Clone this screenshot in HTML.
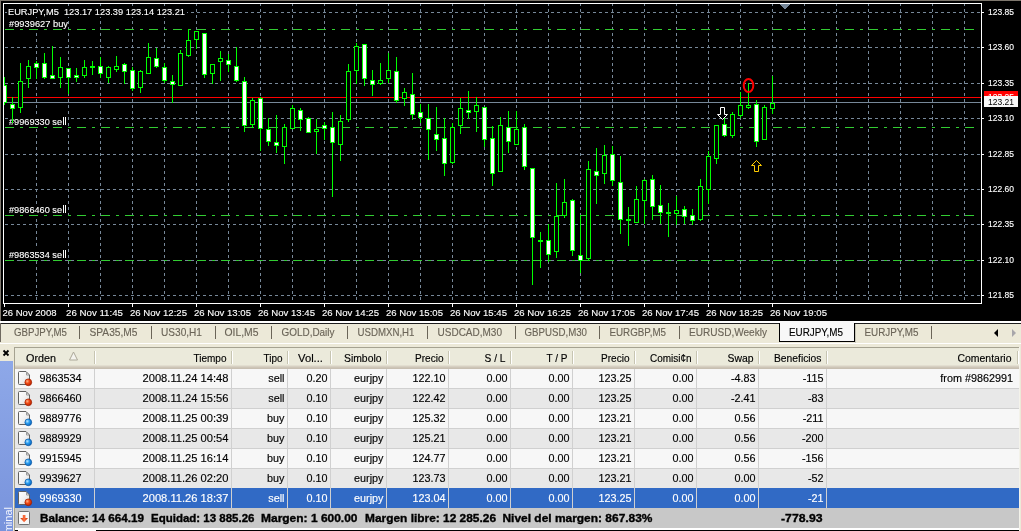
<!DOCTYPE html>
<html><head><meta charset="utf-8"><style>
*{margin:0;padding:0}
html,body{width:1021px;height:531px;overflow:hidden;background:#ece9d8}
svg{position:absolute;left:0;top:0;font-family:"Liberation Sans", sans-serif;will-change:transform}
</style></head><body>
<svg width="1021" height="531" viewBox="0 0 1021 531">
<rect x="0" y="0" width="1021" height="531" fill="#ece9d8"/>
<rect x="0" y="0" width="1021" height="321" fill="#000"/>
<rect x="0" y="0" width="1021" height="1" fill="#7d766c"/>
<rect x="0" y="0" width="1" height="343" fill="#7d766c"/>
<g shape-rendering="crispEdges">
<line x1="36.5" y1="3" x2="36.5" y2="303" stroke="#778899" stroke-dasharray="3 3"/>
<line x1="68.5" y1="3" x2="68.5" y2="303" stroke="#778899" stroke-dasharray="3 3"/>
<line x1="100.5" y1="3" x2="100.5" y2="303" stroke="#778899" stroke-dasharray="3 3"/>
<line x1="132.5" y1="3" x2="132.5" y2="303" stroke="#778899" stroke-dasharray="3 3"/>
<line x1="164.5" y1="3" x2="164.5" y2="303" stroke="#778899" stroke-dasharray="3 3"/>
<line x1="196.5" y1="3" x2="196.5" y2="303" stroke="#778899" stroke-dasharray="3 3"/>
<line x1="228.5" y1="3" x2="228.5" y2="303" stroke="#778899" stroke-dasharray="3 3"/>
<line x1="260.5" y1="3" x2="260.5" y2="303" stroke="#778899" stroke-dasharray="3 3"/>
<line x1="292.5" y1="3" x2="292.5" y2="303" stroke="#778899" stroke-dasharray="3 3"/>
<line x1="324.5" y1="3" x2="324.5" y2="303" stroke="#778899" stroke-dasharray="3 3"/>
<line x1="356.5" y1="3" x2="356.5" y2="303" stroke="#778899" stroke-dasharray="3 3"/>
<line x1="388.5" y1="3" x2="388.5" y2="303" stroke="#778899" stroke-dasharray="3 3"/>
<line x1="420.5" y1="3" x2="420.5" y2="303" stroke="#778899" stroke-dasharray="3 3"/>
<line x1="452.5" y1="3" x2="452.5" y2="303" stroke="#778899" stroke-dasharray="3 3"/>
<line x1="484.5" y1="3" x2="484.5" y2="303" stroke="#778899" stroke-dasharray="3 3"/>
<line x1="516.5" y1="3" x2="516.5" y2="303" stroke="#778899" stroke-dasharray="3 3"/>
<line x1="548.5" y1="3" x2="548.5" y2="303" stroke="#778899" stroke-dasharray="3 3"/>
<line x1="580.5" y1="3" x2="580.5" y2="303" stroke="#778899" stroke-dasharray="3 3"/>
<line x1="612.5" y1="3" x2="612.5" y2="303" stroke="#778899" stroke-dasharray="3 3"/>
<line x1="644.5" y1="3" x2="644.5" y2="303" stroke="#778899" stroke-dasharray="3 3"/>
<line x1="676.5" y1="3" x2="676.5" y2="303" stroke="#778899" stroke-dasharray="3 3"/>
<line x1="708.5" y1="3" x2="708.5" y2="303" stroke="#778899" stroke-dasharray="3 3"/>
<line x1="740.5" y1="3" x2="740.5" y2="303" stroke="#778899" stroke-dasharray="3 3"/>
<line x1="772.5" y1="3" x2="772.5" y2="303" stroke="#778899" stroke-dasharray="3 3"/>
<line x1="804.5" y1="3" x2="804.5" y2="303" stroke="#778899" stroke-dasharray="3 3"/>
<line x1="836.5" y1="3" x2="836.5" y2="303" stroke="#778899" stroke-dasharray="3 3"/>
<line x1="868.5" y1="3" x2="868.5" y2="303" stroke="#778899" stroke-dasharray="3 3"/>
<line x1="900.5" y1="3" x2="900.5" y2="303" stroke="#778899" stroke-dasharray="3 3"/>
<line x1="932.5" y1="3" x2="932.5" y2="303" stroke="#778899" stroke-dasharray="3 3"/>
<line x1="964.5" y1="3" x2="964.5" y2="303" stroke="#778899" stroke-dasharray="3 3"/>
<line x1="5" y1="12.5" x2="981" y2="12.5" stroke="#778899" stroke-dasharray="3 3"/>
<line x1="5" y1="47.5" x2="981" y2="47.5" stroke="#778899" stroke-dasharray="3 3"/>
<line x1="5" y1="83.5" x2="981" y2="83.5" stroke="#778899" stroke-dasharray="3 3"/>
<line x1="5" y1="118.5" x2="981" y2="118.5" stroke="#778899" stroke-dasharray="3 3"/>
<line x1="5" y1="154.5" x2="981" y2="154.5" stroke="#778899" stroke-dasharray="3 3"/>
<line x1="5" y1="189.5" x2="981" y2="189.5" stroke="#778899" stroke-dasharray="3 3"/>
<line x1="5" y1="224.5" x2="981" y2="224.5" stroke="#778899" stroke-dasharray="3 3"/>
<line x1="5" y1="260.5" x2="981" y2="260.5" stroke="#778899" stroke-dasharray="3 3"/>
<line x1="5" y1="295.5" x2="981" y2="295.5" stroke="#778899" stroke-dasharray="3 3"/>
<line x1="5" y1="29.5" x2="974" y2="29.5" stroke="#32cd32" stroke-dasharray="9 6 3 6"/>
<line x1="5" y1="127.5" x2="974" y2="127.5" stroke="#32cd32" stroke-dasharray="9 6 3 6"/>
<line x1="5" y1="215.5" x2="974" y2="215.5" stroke="#32cd32" stroke-dasharray="9 6 3 6"/>
<line x1="5" y1="260.5" x2="974" y2="260.5" stroke="#32cd32" stroke-dasharray="9 6 3 6"/>
</g>
<rect x="7" y="7" width="180" height="10" fill="#000"/>
<rect x="8" y="18" width="60" height="11" fill="#000"/>
<rect x="8" y="116" width="60" height="11" fill="#000"/>
<rect x="8" y="204" width="60" height="11" fill="#000"/>
<rect x="8" y="249" width="60" height="11" fill="#000"/>
<text x="8" y="15" font-size="9.5" fill="#fff" textLength="177" lengthAdjust="spacingAndGlyphs" stroke="#fff" stroke-width="0.12" xml:space="preserve">EURJPY,M5  123.17 123.39 123.14 123.21</text>
<text x="9" y="27" font-size="9.5" fill="#fff" textLength="59" lengthAdjust="spacingAndGlyphs" stroke="#fff" stroke-width="0.12" xml:space="preserve">#9939627 buy</text>
<text x="9" y="125" font-size="9.5" fill="#fff" textLength="53" lengthAdjust="spacingAndGlyphs" stroke="#fff" stroke-width="0.12" xml:space="preserve">#9969330 se</text>
<rect x="63" y="117" width="1" height="8" fill="#fff"/>
<rect x="65" y="117" width="1" height="8" fill="#fff"/>
<text x="9" y="213" font-size="9.5" fill="#fff" textLength="53" lengthAdjust="spacingAndGlyphs" stroke="#fff" stroke-width="0.12" xml:space="preserve">#9866460 se</text>
<rect x="63" y="205" width="1" height="8" fill="#fff"/>
<rect x="65" y="205" width="1" height="8" fill="#fff"/>
<text x="9" y="258" font-size="9.5" fill="#fff" textLength="53" lengthAdjust="spacingAndGlyphs" stroke="#fff" stroke-width="0.12" xml:space="preserve">#9863534 se</text>
<rect x="63" y="250" width="1" height="8" fill="#fff"/>
<rect x="65" y="250" width="1" height="8" fill="#fff"/>
<g shape-rendering="crispEdges">
<line x1="4" y1="97.5" x2="981" y2="97.5" stroke="#ff0000"/>
<line x1="4" y1="102.5" x2="981" y2="102.5" stroke="#778899"/>
<clipPath id="cc"><rect x="4" y="4" width="977" height="299"/></clipPath><g clip-path="url(#cc)">
<line x1="4.5" y1="77" x2="4.5" y2="105" stroke="#00ff00"/>
<rect x="2.5" y="85.5" width="4" height="17" fill="#ffffff" stroke="#00ff00"/>
<line x1="12.5" y1="97" x2="12.5" y2="123" stroke="#00ff00"/>
<rect x="10.5" y="104.5" width="4" height="4" fill="#ffffff" stroke="#00ff00"/>
<line x1="20.5" y1="63" x2="20.5" y2="113" stroke="#00ff00"/>
<rect x="18.5" y="81.5" width="4" height="26" fill="#000000" stroke="#00ff00"/>
<line x1="28.5" y1="60" x2="28.5" y2="88" stroke="#00ff00"/>
<rect x="26.5" y="66.5" width="4" height="12" fill="#000000" stroke="#00ff00"/>
<line x1="36.5" y1="61" x2="36.5" y2="79" stroke="#00ff00"/>
<rect x="34.5" y="63.5" width="4" height="4" fill="#ffffff" stroke="#00ff00"/>
<line x1="44.5" y1="53" x2="44.5" y2="79" stroke="#00ff00"/>
<rect x="42.5" y="63.5" width="4" height="14" fill="#ffffff" stroke="#00ff00"/>
<line x1="52.5" y1="46" x2="52.5" y2="79" stroke="#00ff00"/>
<rect x="50.5" y="75.5" width="4" height="3" fill="#ffffff" stroke="#00ff00"/>
<line x1="60.5" y1="57" x2="60.5" y2="88" stroke="#00ff00"/>
<rect x="58.5" y="67.5" width="4" height="10" fill="#000000" stroke="#00ff00"/>
<line x1="68.5" y1="68" x2="68.5" y2="94" stroke="#00ff00"/>
<rect x="66.5" y="68.5" width="4" height="9" fill="#ffffff" stroke="#00ff00"/>
<line x1="76.5" y1="68" x2="76.5" y2="82" stroke="#00ff00"/>
<rect x="74.5" y="75.5" width="4" height="2" fill="#ffffff" stroke="#00ff00"/>
<line x1="84.5" y1="60" x2="84.5" y2="78" stroke="#00ff00"/>
<rect x="82.5" y="67.5" width="4" height="8" fill="#000000" stroke="#00ff00"/>
<line x1="92.5" y1="61" x2="92.5" y2="75" stroke="#00ff00"/>
<rect x="90" y="66" width="5" height="2" fill="#00ff00"/>
<line x1="100.5" y1="57" x2="100.5" y2="78" stroke="#00ff00"/>
<rect x="98.5" y="66.5" width="4" height="7" fill="#ffffff" stroke="#00ff00"/>
<line x1="108.5" y1="66" x2="108.5" y2="83" stroke="#00ff00"/>
<rect x="106.5" y="67.5" width="4" height="10" fill="#000000" stroke="#00ff00"/>
<line x1="116.5" y1="56" x2="116.5" y2="72" stroke="#00ff00"/>
<rect x="114.5" y="66.5" width="4" height="3" fill="#000000" stroke="#00ff00"/>
<line x1="124.5" y1="63" x2="124.5" y2="84" stroke="#00ff00"/>
<rect x="122.5" y="64.5" width="4" height="7" fill="#ffffff" stroke="#00ff00"/>
<line x1="132.5" y1="67" x2="132.5" y2="91" stroke="#00ff00"/>
<rect x="130.5" y="70.5" width="4" height="18" fill="#ffffff" stroke="#00ff00"/>
<line x1="140.5" y1="70" x2="140.5" y2="93" stroke="#00ff00"/>
<rect x="138.5" y="71.5" width="4" height="16" fill="#000000" stroke="#00ff00"/>
<line x1="148.5" y1="43" x2="148.5" y2="74" stroke="#00ff00"/>
<rect x="146.5" y="57.5" width="4" height="16" fill="#000000" stroke="#00ff00"/>
<line x1="156.5" y1="48" x2="156.5" y2="68" stroke="#00ff00"/>
<rect x="154.5" y="58.5" width="4" height="8" fill="#ffffff" stroke="#00ff00"/>
<line x1="164.5" y1="63" x2="164.5" y2="83" stroke="#00ff00"/>
<rect x="162.5" y="67.5" width="4" height="13" fill="#ffffff" stroke="#00ff00"/>
<line x1="172.5" y1="75" x2="172.5" y2="103" stroke="#00ff00"/>
<rect x="170.5" y="81.5" width="4" height="3" fill="#ffffff" stroke="#00ff00"/>
<line x1="180.5" y1="50" x2="180.5" y2="86" stroke="#00ff00"/>
<rect x="178.5" y="53.5" width="4" height="32" fill="#000000" stroke="#00ff00"/>
<line x1="188.5" y1="29" x2="188.5" y2="57" stroke="#00ff00"/>
<rect x="186.5" y="40.5" width="4" height="15" fill="#000000" stroke="#00ff00"/>
<line x1="196.5" y1="31" x2="196.5" y2="49" stroke="#00ff00"/>
<rect x="194.5" y="31.5" width="4" height="8" fill="#000000" stroke="#00ff00"/>
<line x1="204.5" y1="33" x2="204.5" y2="78" stroke="#00ff00"/>
<rect x="202.5" y="33.5" width="4" height="41" fill="#ffffff" stroke="#00ff00"/>
<line x1="212.5" y1="64" x2="212.5" y2="84" stroke="#00ff00"/>
<rect x="210.5" y="64.5" width="4" height="9" fill="#000000" stroke="#00ff00"/>
<line x1="220.5" y1="51" x2="220.5" y2="81" stroke="#00ff00"/>
<rect x="218.5" y="58.5" width="4" height="3" fill="#000000" stroke="#00ff00"/>
<line x1="228.5" y1="54" x2="228.5" y2="72" stroke="#00ff00"/>
<rect x="226.5" y="60.5" width="4" height="4" fill="#ffffff" stroke="#00ff00"/>
<line x1="236.5" y1="47" x2="236.5" y2="82" stroke="#00ff00"/>
<rect x="234.5" y="66.5" width="4" height="14" fill="#ffffff" stroke="#00ff00"/>
<line x1="244.5" y1="77" x2="244.5" y2="132" stroke="#00ff00"/>
<rect x="242.5" y="81.5" width="4" height="44" fill="#ffffff" stroke="#00ff00"/>
<line x1="252.5" y1="98" x2="252.5" y2="128" stroke="#00ff00"/>
<rect x="250.5" y="100.5" width="4" height="24" fill="#000000" stroke="#00ff00"/>
<line x1="260.5" y1="97" x2="260.5" y2="151" stroke="#00ff00"/>
<rect x="258.5" y="98.5" width="4" height="30" fill="#ffffff" stroke="#00ff00"/>
<line x1="268.5" y1="118" x2="268.5" y2="146" stroke="#00ff00"/>
<rect x="266.5" y="129.5" width="4" height="12" fill="#ffffff" stroke="#00ff00"/>
<line x1="276.5" y1="115" x2="276.5" y2="153" stroke="#00ff00"/>
<rect x="274.5" y="142.5" width="4" height="3" fill="#ffffff" stroke="#00ff00"/>
<line x1="284.5" y1="124" x2="284.5" y2="164" stroke="#00ff00"/>
<rect x="282.5" y="127.5" width="4" height="19" fill="#000000" stroke="#00ff00"/>
<line x1="292.5" y1="105" x2="292.5" y2="129" stroke="#00ff00"/>
<rect x="290.5" y="108.5" width="4" height="20" fill="#000000" stroke="#00ff00"/>
<line x1="300.5" y1="108" x2="300.5" y2="131" stroke="#00ff00"/>
<rect x="298.5" y="110.5" width="4" height="9" fill="#ffffff" stroke="#00ff00"/>
<line x1="308.5" y1="117" x2="308.5" y2="133" stroke="#00ff00"/>
<rect x="306.5" y="118.5" width="4" height="14" fill="#ffffff" stroke="#00ff00"/>
<line x1="316.5" y1="119" x2="316.5" y2="154" stroke="#00ff00"/>
<rect x="314.5" y="129.5" width="4" height="2" fill="#000000" stroke="#00ff00"/>
<line x1="324.5" y1="122" x2="324.5" y2="140" stroke="#00ff00"/>
<rect x="322.5" y="125.5" width="4" height="3" fill="#ffffff" stroke="#00ff00"/>
<line x1="332.5" y1="112" x2="332.5" y2="197" stroke="#00ff00"/>
<rect x="330.5" y="127.5" width="4" height="15" fill="#ffffff" stroke="#00ff00"/>
<line x1="340.5" y1="115" x2="340.5" y2="161" stroke="#00ff00"/>
<rect x="338.5" y="121.5" width="4" height="23" fill="#000000" stroke="#00ff00"/>
<line x1="348.5" y1="64" x2="348.5" y2="122" stroke="#00ff00"/>
<rect x="346.5" y="71.5" width="4" height="48" fill="#000000" stroke="#00ff00"/>
<line x1="356.5" y1="43" x2="356.5" y2="84" stroke="#00ff00"/>
<rect x="354.5" y="46.5" width="4" height="24" fill="#000000" stroke="#00ff00"/>
<line x1="364.5" y1="44" x2="364.5" y2="86" stroke="#00ff00"/>
<rect x="362.5" y="44.5" width="4" height="34" fill="#ffffff" stroke="#00ff00"/>
<line x1="372.5" y1="70" x2="372.5" y2="96" stroke="#00ff00"/>
<rect x="370.5" y="80.5" width="4" height="4" fill="#ffffff" stroke="#00ff00"/>
<line x1="380.5" y1="63" x2="380.5" y2="85" stroke="#00ff00"/>
<rect x="378.5" y="80.5" width="4" height="3" fill="#000000" stroke="#00ff00"/>
<line x1="388.5" y1="53" x2="388.5" y2="83" stroke="#00ff00"/>
<rect x="386.5" y="70.5" width="4" height="8" fill="#000000" stroke="#00ff00"/>
<line x1="396.5" y1="57" x2="396.5" y2="103" stroke="#00ff00"/>
<rect x="394.5" y="71.5" width="4" height="29" fill="#ffffff" stroke="#00ff00"/>
<line x1="404.5" y1="88" x2="404.5" y2="106" stroke="#00ff00"/>
<rect x="402.5" y="92.5" width="4" height="6" fill="#000000" stroke="#00ff00"/>
<line x1="412.5" y1="73" x2="412.5" y2="120" stroke="#00ff00"/>
<rect x="410.5" y="94.5" width="4" height="20" fill="#ffffff" stroke="#00ff00"/>
<line x1="420.5" y1="104" x2="420.5" y2="123" stroke="#00ff00"/>
<rect x="418.5" y="112.5" width="4" height="5" fill="#ffffff" stroke="#00ff00"/>
<line x1="428.5" y1="104" x2="428.5" y2="160" stroke="#00ff00"/>
<rect x="426.5" y="118.5" width="4" height="11" fill="#ffffff" stroke="#00ff00"/>
<line x1="436.5" y1="107" x2="436.5" y2="151" stroke="#00ff00"/>
<rect x="434.5" y="134.5" width="4" height="5" fill="#ffffff" stroke="#00ff00"/>
<line x1="444.5" y1="118" x2="444.5" y2="176" stroke="#00ff00"/>
<rect x="442.5" y="138.5" width="4" height="25" fill="#ffffff" stroke="#00ff00"/>
<line x1="452.5" y1="123" x2="452.5" y2="164" stroke="#00ff00"/>
<rect x="450.5" y="127.5" width="4" height="35" fill="#000000" stroke="#00ff00"/>
<line x1="460.5" y1="98" x2="460.5" y2="134" stroke="#00ff00"/>
<rect x="458.5" y="108.5" width="4" height="17" fill="#000000" stroke="#00ff00"/>
<line x1="468.5" y1="91" x2="468.5" y2="119" stroke="#00ff00"/>
<rect x="466.5" y="110.5" width="4" height="2" fill="#ffffff" stroke="#00ff00"/>
<line x1="476.5" y1="97" x2="476.5" y2="132" stroke="#00ff00"/>
<rect x="474.5" y="105.5" width="4" height="6" fill="#000000" stroke="#00ff00"/>
<line x1="484.5" y1="107" x2="484.5" y2="147" stroke="#00ff00"/>
<rect x="482.5" y="107.5" width="4" height="32" fill="#ffffff" stroke="#00ff00"/>
<line x1="492.5" y1="126" x2="492.5" y2="186" stroke="#00ff00"/>
<rect x="490.5" y="138.5" width="4" height="35" fill="#ffffff" stroke="#00ff00"/>
<line x1="500.5" y1="117" x2="500.5" y2="172" stroke="#00ff00"/>
<rect x="498.5" y="125.5" width="4" height="46" fill="#000000" stroke="#00ff00"/>
<line x1="508.5" y1="111" x2="508.5" y2="153" stroke="#00ff00"/>
<rect x="506.5" y="127.5" width="4" height="14" fill="#ffffff" stroke="#00ff00"/>
<line x1="516.5" y1="111" x2="516.5" y2="145" stroke="#00ff00"/>
<rect x="514.5" y="129.5" width="4" height="15" fill="#000000" stroke="#00ff00"/>
<line x1="524.5" y1="124" x2="524.5" y2="170" stroke="#00ff00"/>
<rect x="522.5" y="127.5" width="4" height="39" fill="#ffffff" stroke="#00ff00"/>
<line x1="532.5" y1="168" x2="532.5" y2="285" stroke="#00ff00"/>
<rect x="530.5" y="168.5" width="4" height="69" fill="#ffffff" stroke="#00ff00"/>
<line x1="540.5" y1="232" x2="540.5" y2="268" stroke="#00ff00"/>
<rect x="538" y="240" width="5" height="2" fill="#00ff00"/>
<line x1="548.5" y1="224" x2="548.5" y2="262" stroke="#00ff00"/>
<rect x="546.5" y="240.5" width="4" height="14" fill="#ffffff" stroke="#00ff00"/>
<line x1="556.5" y1="183" x2="556.5" y2="258" stroke="#00ff00"/>
<rect x="554.5" y="216.5" width="4" height="35" fill="#000000" stroke="#00ff00"/>
<line x1="564.5" y1="179" x2="564.5" y2="218" stroke="#00ff00"/>
<rect x="562.5" y="202.5" width="4" height="13" fill="#000000" stroke="#00ff00"/>
<line x1="572.5" y1="199" x2="572.5" y2="256" stroke="#00ff00"/>
<rect x="570.5" y="200.5" width="4" height="50" fill="#ffffff" stroke="#00ff00"/>
<line x1="580.5" y1="215" x2="580.5" y2="273" stroke="#00ff00"/>
<rect x="578.5" y="255.5" width="4" height="5" fill="#ffffff" stroke="#00ff00"/>
<line x1="588.5" y1="161" x2="588.5" y2="261" stroke="#00ff00"/>
<rect x="586.5" y="169.5" width="4" height="89" fill="#000000" stroke="#00ff00"/>
<line x1="596.5" y1="148" x2="596.5" y2="204" stroke="#00ff00"/>
<rect x="594.5" y="171.5" width="4" height="4" fill="#ffffff" stroke="#00ff00"/>
<line x1="604.5" y1="145" x2="604.5" y2="184" stroke="#00ff00"/>
<rect x="602.5" y="155.5" width="4" height="18" fill="#000000" stroke="#00ff00"/>
<line x1="612.5" y1="146" x2="612.5" y2="186" stroke="#00ff00"/>
<rect x="610.5" y="154.5" width="4" height="26" fill="#ffffff" stroke="#00ff00"/>
<line x1="620.5" y1="156" x2="620.5" y2="234" stroke="#00ff00"/>
<rect x="618.5" y="182.5" width="4" height="37" fill="#ffffff" stroke="#00ff00"/>
<line x1="628.5" y1="207" x2="628.5" y2="246" stroke="#00ff00"/>
<rect x="626" y="219" width="5" height="2" fill="#00ff00"/>
<line x1="636.5" y1="186" x2="636.5" y2="223" stroke="#00ff00"/>
<rect x="634.5" y="199.5" width="4" height="23" fill="#000000" stroke="#00ff00"/>
<line x1="644.5" y1="179" x2="644.5" y2="224" stroke="#00ff00"/>
<rect x="642.5" y="180.5" width="4" height="20" fill="#000000" stroke="#00ff00"/>
<line x1="652.5" y1="175" x2="652.5" y2="220" stroke="#00ff00"/>
<rect x="650.5" y="179.5" width="4" height="27" fill="#ffffff" stroke="#00ff00"/>
<line x1="660.5" y1="185" x2="660.5" y2="224" stroke="#00ff00"/>
<rect x="658.5" y="205.5" width="4" height="7" fill="#ffffff" stroke="#00ff00"/>
<line x1="668.5" y1="203" x2="668.5" y2="237" stroke="#00ff00"/>
<rect x="666" y="212" width="5" height="2" fill="#00ff00"/>
<line x1="676.5" y1="196" x2="676.5" y2="225" stroke="#00ff00"/>
<rect x="674.5" y="210.5" width="4" height="3" fill="#000000" stroke="#00ff00"/>
<line x1="684.5" y1="206" x2="684.5" y2="224" stroke="#00ff00"/>
<rect x="682.5" y="209.5" width="4" height="7" fill="#ffffff" stroke="#00ff00"/>
<line x1="692.5" y1="209" x2="692.5" y2="225" stroke="#00ff00"/>
<rect x="690.5" y="215.5" width="4" height="5" fill="#ffffff" stroke="#00ff00"/>
<line x1="700.5" y1="179" x2="700.5" y2="221" stroke="#00ff00"/>
<rect x="698.5" y="186.5" width="4" height="33" fill="#000000" stroke="#00ff00"/>
<line x1="708.5" y1="151" x2="708.5" y2="204" stroke="#00ff00"/>
<rect x="706.5" y="156.5" width="4" height="33" fill="#000000" stroke="#00ff00"/>
<line x1="716.5" y1="125" x2="716.5" y2="164" stroke="#00ff00"/>
<rect x="714.5" y="125.5" width="4" height="33" fill="#000000" stroke="#00ff00"/>
<line x1="724.5" y1="118" x2="724.5" y2="137" stroke="#00ff00"/>
<rect x="722.5" y="124.5" width="4" height="11" fill="#ffffff" stroke="#00ff00"/>
<line x1="732.5" y1="112" x2="732.5" y2="138" stroke="#00ff00"/>
<rect x="730.5" y="114.5" width="4" height="21" fill="#000000" stroke="#00ff00"/>
<line x1="740.5" y1="92" x2="740.5" y2="118" stroke="#00ff00"/>
<rect x="738.5" y="105.5" width="4" height="10" fill="#000000" stroke="#00ff00"/>
<line x1="748.5" y1="83" x2="748.5" y2="109" stroke="#00ff00"/>
<rect x="746.5" y="105.5" width="4" height="2" fill="#000000" stroke="#00ff00"/>
<line x1="756.5" y1="100" x2="756.5" y2="147" stroke="#00ff00"/>
<rect x="754.5" y="104.5" width="4" height="37" fill="#ffffff" stroke="#00ff00"/>
<line x1="764.5" y1="105" x2="764.5" y2="140" stroke="#00ff00"/>
<rect x="762.5" y="107.5" width="4" height="32" fill="#000000" stroke="#00ff00"/>
<line x1="772.5" y1="76" x2="772.5" y2="114" stroke="#00ff00"/>
<rect x="770.5" y="103.5" width="4" height="5" fill="#000000" stroke="#00ff00"/>
</g>
<rect x="3.5" y="3.5" width="978" height="300" fill="none" stroke="#fff"/>
<polygon points="780,4 790,4 785,9.5" fill="#778899"/>
<rect x="982" y="12" width="2" height="1" fill="#fff"/>
<rect x="982" y="47" width="2" height="1" fill="#fff"/>
<rect x="982" y="83" width="2" height="1" fill="#fff"/>
<rect x="982" y="118" width="2" height="1" fill="#fff"/>
<rect x="982" y="154" width="2" height="1" fill="#fff"/>
<rect x="982" y="189" width="2" height="1" fill="#fff"/>
<rect x="982" y="224" width="2" height="1" fill="#fff"/>
<rect x="982" y="260" width="2" height="1" fill="#fff"/>
<rect x="982" y="295" width="2" height="1" fill="#fff"/>
</g>
<text x="988" y="15" font-size="9" fill="#fff" textLength="26" lengthAdjust="spacingAndGlyphs" stroke="#fff" stroke-width="0.12" xml:space="preserve">123.85</text>
<text x="988" y="50" font-size="9" fill="#fff" textLength="26" lengthAdjust="spacingAndGlyphs" stroke="#fff" stroke-width="0.12" xml:space="preserve">123.60</text>
<text x="988" y="86" font-size="9" fill="#fff" textLength="26" lengthAdjust="spacingAndGlyphs" stroke="#fff" stroke-width="0.12" xml:space="preserve">123.35</text>
<text x="988" y="121" font-size="9" fill="#fff" textLength="26" lengthAdjust="spacingAndGlyphs" stroke="#fff" stroke-width="0.12" xml:space="preserve">123.10</text>
<text x="988" y="157" font-size="9" fill="#fff" textLength="26" lengthAdjust="spacingAndGlyphs" stroke="#fff" stroke-width="0.12" xml:space="preserve">122.85</text>
<text x="988" y="192" font-size="9" fill="#fff" textLength="26" lengthAdjust="spacingAndGlyphs" stroke="#fff" stroke-width="0.12" xml:space="preserve">122.60</text>
<text x="988" y="227" font-size="9" fill="#fff" textLength="26" lengthAdjust="spacingAndGlyphs" stroke="#fff" stroke-width="0.12" xml:space="preserve">122.35</text>
<text x="988" y="263" font-size="9" fill="#fff" textLength="26" lengthAdjust="spacingAndGlyphs" stroke="#fff" stroke-width="0.12" xml:space="preserve">122.10</text>
<text x="988" y="298" font-size="9" fill="#fff" textLength="26" lengthAdjust="spacingAndGlyphs" stroke="#fff" stroke-width="0.12" xml:space="preserve">121.85</text>
<rect x="984" y="91" width="34" height="11" fill="#ff0000"/>
<text x="988" y="100" font-size="9" fill="#fff" textLength="26" lengthAdjust="spacingAndGlyphs" stroke="#fff" stroke-width="0.12" xml:space="preserve">123.25</text>
<rect x="984" y="96" width="34" height="11" fill="#f8f8f8"/>
<text x="988" y="105" font-size="9" fill="#000" textLength="26" lengthAdjust="spacingAndGlyphs" xml:space="preserve">123.21</text>
<rect x="4" y="304" width="1" height="3" fill="#fff"/>
<text x="2.5" y="316" font-size="9.5" fill="#fff" textLength="54" lengthAdjust="spacingAndGlyphs" stroke="#fff" stroke-width="0.12" xml:space="preserve">26 Nov 2008</text>
<rect x="68" y="304" width="1" height="3" fill="#fff"/>
<text x="66" y="316" font-size="9.5" fill="#fff" textLength="57" lengthAdjust="spacingAndGlyphs" stroke="#fff" stroke-width="0.12" xml:space="preserve">26 Nov 11:45</text>
<rect x="132" y="304" width="1" height="3" fill="#fff"/>
<text x="130" y="316" font-size="9.5" fill="#fff" textLength="57" lengthAdjust="spacingAndGlyphs" stroke="#fff" stroke-width="0.12" xml:space="preserve">26 Nov 12:25</text>
<rect x="196" y="304" width="1" height="3" fill="#fff"/>
<text x="194" y="316" font-size="9.5" fill="#fff" textLength="57" lengthAdjust="spacingAndGlyphs" stroke="#fff" stroke-width="0.12" xml:space="preserve">26 Nov 13:05</text>
<rect x="260" y="304" width="1" height="3" fill="#fff"/>
<text x="258" y="316" font-size="9.5" fill="#fff" textLength="57" lengthAdjust="spacingAndGlyphs" stroke="#fff" stroke-width="0.12" xml:space="preserve">26 Nov 13:45</text>
<rect x="324" y="304" width="1" height="3" fill="#fff"/>
<text x="322" y="316" font-size="9.5" fill="#fff" textLength="57" lengthAdjust="spacingAndGlyphs" stroke="#fff" stroke-width="0.12" xml:space="preserve">26 Nov 14:25</text>
<rect x="388" y="304" width="1" height="3" fill="#fff"/>
<text x="386" y="316" font-size="9.5" fill="#fff" textLength="57" lengthAdjust="spacingAndGlyphs" stroke="#fff" stroke-width="0.12" xml:space="preserve">26 Nov 15:05</text>
<rect x="452" y="304" width="1" height="3" fill="#fff"/>
<text x="450" y="316" font-size="9.5" fill="#fff" textLength="57" lengthAdjust="spacingAndGlyphs" stroke="#fff" stroke-width="0.12" xml:space="preserve">26 Nov 15:45</text>
<rect x="516" y="304" width="1" height="3" fill="#fff"/>
<text x="514" y="316" font-size="9.5" fill="#fff" textLength="57" lengthAdjust="spacingAndGlyphs" stroke="#fff" stroke-width="0.12" xml:space="preserve">26 Nov 16:25</text>
<rect x="580" y="304" width="1" height="3" fill="#fff"/>
<text x="578" y="316" font-size="9.5" fill="#fff" textLength="57" lengthAdjust="spacingAndGlyphs" stroke="#fff" stroke-width="0.12" xml:space="preserve">26 Nov 17:05</text>
<rect x="644" y="304" width="1" height="3" fill="#fff"/>
<text x="642" y="316" font-size="9.5" fill="#fff" textLength="57" lengthAdjust="spacingAndGlyphs" stroke="#fff" stroke-width="0.12" xml:space="preserve">26 Nov 17:45</text>
<rect x="708" y="304" width="1" height="3" fill="#fff"/>
<text x="706" y="316" font-size="9.5" fill="#fff" textLength="57" lengthAdjust="spacingAndGlyphs" stroke="#fff" stroke-width="0.12" xml:space="preserve">26 Nov 18:25</text>
<rect x="772" y="304" width="1" height="3" fill="#fff"/>
<text x="770" y="316" font-size="9.5" fill="#fff" textLength="57" lengthAdjust="spacingAndGlyphs" stroke="#fff" stroke-width="0.12" xml:space="preserve">26 Nov 19:05</text>
<ellipse cx="748.5" cy="85.5" rx="4.8" ry="6.6" fill="none" stroke="#ff0000" stroke-width="2"/>
<path d="M720.5,107.5 h4 v7 h3 l-5,5 l-5,-5 h3 z" fill="none" stroke="#fff" stroke-width="1"/>
<path d="M756.5,160.5 L761.5,165.5 H758.5 V171.5 H754.5 V165.5 H751.5 Z" fill="none" stroke="#ffcc00" stroke-width="1"/>
<rect x="0" y="321" width="1021" height="23" fill="#ece9d8"/>
<rect x="0" y="321" width="1021" height="1" fill="#ffffff"/>
<rect x="0" y="322" width="1021" height="1" fill="#ffffff"/>
<rect x="0" y="323" width="779" height="1" fill="#1e1e1e"/>
<rect x="854" y="323" width="167" height="1" fill="#1e1e1e"/>
<rect x="0" y="343" width="1021" height="1" fill="#ffffff"/>
<rect x="0" y="323" width="1" height="19" fill="#6f6a60"/>
<text x="14" y="336" font-size="11" fill="#6b6558" textLength="53" lengthAdjust="spacingAndGlyphs" stroke="#6b6558" stroke-width="0.15" xml:space="preserve">GBPJPY,M5</text>
<text x="89.5" y="336" font-size="11" fill="#6b6558" textLength="48.0" lengthAdjust="spacingAndGlyphs" stroke="#6b6558" stroke-width="0.15" xml:space="preserve">SPA35,M5</text>
<text x="161" y="336" font-size="11" fill="#6b6558" textLength="41" lengthAdjust="spacingAndGlyphs" stroke="#6b6558" stroke-width="0.15" xml:space="preserve">US30,H1</text>
<text x="224.5" y="336" font-size="11" fill="#6b6558" textLength="34.0" lengthAdjust="spacingAndGlyphs" stroke="#6b6558" stroke-width="0.15" xml:space="preserve">OIL,M5</text>
<text x="281.5" y="336" font-size="11" fill="#6b6558" textLength="53.0" lengthAdjust="spacingAndGlyphs" stroke="#6b6558" stroke-width="0.15" xml:space="preserve">GOLD,Daily</text>
<text x="357.5" y="336" font-size="11" fill="#6b6558" textLength="57.0" lengthAdjust="spacingAndGlyphs" stroke="#6b6558" stroke-width="0.15" xml:space="preserve">USDMXN,H1</text>
<text x="437.5" y="336" font-size="11" fill="#6b6558" textLength="64.5" lengthAdjust="spacingAndGlyphs" stroke="#6b6558" stroke-width="0.15" xml:space="preserve">USDCAD,M30</text>
<text x="524.5" y="336" font-size="11" fill="#6b6558" textLength="62.5" lengthAdjust="spacingAndGlyphs" stroke="#6b6558" stroke-width="0.15" xml:space="preserve">GBPUSD,M30</text>
<text x="609.5" y="336" font-size="11" fill="#6b6558" textLength="56.5" lengthAdjust="spacingAndGlyphs" stroke="#6b6558" stroke-width="0.15" xml:space="preserve">EURGBP,M5</text>
<text x="689" y="336" font-size="11" fill="#6b6558" textLength="78" lengthAdjust="spacingAndGlyphs" stroke="#6b6558" stroke-width="0.15" xml:space="preserve">EURUSD,Weekly</text>
<rect x="79" y="326" width="1" height="13" fill="#6b6558"/>
<rect x="151" y="326" width="1" height="13" fill="#6b6558"/>
<rect x="215" y="326" width="1" height="13" fill="#6b6558"/>
<rect x="271" y="326" width="1" height="13" fill="#6b6558"/>
<rect x="347" y="326" width="1" height="13" fill="#6b6558"/>
<rect x="427" y="326" width="1" height="13" fill="#6b6558"/>
<rect x="515" y="326" width="1" height="13" fill="#6b6558"/>
<rect x="599" y="326" width="1" height="13" fill="#6b6558"/>
<rect x="679" y="326" width="1" height="13" fill="#6b6558"/>
<rect x="931" y="326" width="1" height="13" fill="#6b6558"/>
<rect x="780" y="321" width="74" height="20" fill="#f8f8f8"/>
<rect x="779" y="323" width="1" height="19" fill="#000"/>
<rect x="779" y="341" width="76" height="1" fill="#000"/>
<rect x="854" y="323" width="1" height="19" fill="#000"/>
<rect x="855" y="324" width="1" height="19" fill="#c8c6b8"/>
<text x="789" y="336" font-size="11" fill="#000" textLength="54" lengthAdjust="spacingAndGlyphs" stroke="#000" stroke-width="0.15" xml:space="preserve">EURJPY,M5</text>
<text x="864.5" y="336" font-size="11" fill="#6b6558" textLength="54" lengthAdjust="spacingAndGlyphs" stroke="#6b6558" stroke-width="0.15" xml:space="preserve">EURJPY,M5</text>
<polygon points="998,329 998,337 994,333" fill="#000"/>
<polygon points="1012,329 1012,337 1016,333" fill="#a7a6aa"/>
<rect x="0" y="344" width="1021" height="187" fill="#ece9d8"/>
<rect x="0" y="343" width="1021" height="1" fill="#ffffff"/>
<defs><linearGradient id="lb" x1="0" y1="0" x2="0" y2="1"><stop offset="0" stop-color="#8ea8e8"/><stop offset="1" stop-color="#7893dc"/></linearGradient><radialGradient id="rb" cx="0.35" cy="0.35" r="0.7"><stop offset="0" stop-color="#ffb08a"/><stop offset="0.45" stop-color="#f04a12"/><stop offset="1" stop-color="#b42000"/></radialGradient><radialGradient id="bb" cx="0.35" cy="0.35" r="0.7"><stop offset="0" stop-color="#b8e4ff"/><stop offset="0.45" stop-color="#2a9ef0"/><stop offset="1" stop-color="#0860b8"/></radialGradient><linearGradient id="pg" x1="0" y1="0" x2="1" y2="1"><stop offset="0" stop-color="#ffffff"/><stop offset="0.5" stop-color="#f2f2f2"/><stop offset="1" stop-color="#d8d8d8"/></linearGradient></defs>
<rect x="0" y="361" width="13" height="170" fill="url(#lb)"/>
<text x="0" y="0" font-size="11" fill="#f4f6ff" text-anchor="end" transform="translate(11.5,507) rotate(-90)">minal</text>
<path d="M3.5,350.5 l5,5 M8.5,350.5 l-5,5" stroke="#000" stroke-width="1.8"/>
<rect x="14" y="347" width="1" height="185" fill="#a5a291"/>
<rect x="14" y="347" width="1006" height="1" fill="#a5a291"/>
<rect x="1019" y="347" width="1" height="184" fill="#f3f2ea"/>
<rect x="1020" y="344" width="1" height="187" fill="#ece9d8"/>
<rect x="15" y="348" width="1004" height="17" fill="#ebeadb"/>
<rect x="94" y="351" width="1" height="13" fill="#c7c5b2"/>
<rect x="95" y="351" width="1" height="13" fill="#ffffff"/>
<rect x="231" y="351" width="1" height="13" fill="#c7c5b2"/>
<rect x="232" y="351" width="1" height="13" fill="#ffffff"/>
<rect x="287" y="351" width="1" height="13" fill="#c7c5b2"/>
<rect x="288" y="351" width="1" height="13" fill="#ffffff"/>
<rect x="330" y="351" width="1" height="13" fill="#c7c5b2"/>
<rect x="331" y="351" width="1" height="13" fill="#ffffff"/>
<rect x="386" y="351" width="1" height="13" fill="#c7c5b2"/>
<rect x="387" y="351" width="1" height="13" fill="#ffffff"/>
<rect x="448" y="351" width="1" height="13" fill="#c7c5b2"/>
<rect x="449" y="351" width="1" height="13" fill="#ffffff"/>
<rect x="510" y="351" width="1" height="13" fill="#c7c5b2"/>
<rect x="511" y="351" width="1" height="13" fill="#ffffff"/>
<rect x="572" y="351" width="1" height="13" fill="#c7c5b2"/>
<rect x="573" y="351" width="1" height="13" fill="#ffffff"/>
<rect x="634" y="351" width="1" height="13" fill="#c7c5b2"/>
<rect x="635" y="351" width="1" height="13" fill="#ffffff"/>
<rect x="696" y="351" width="1" height="13" fill="#c7c5b2"/>
<rect x="697" y="351" width="1" height="13" fill="#ffffff"/>
<rect x="758" y="351" width="1" height="13" fill="#c7c5b2"/>
<rect x="759" y="351" width="1" height="13" fill="#ffffff"/>
<rect x="826" y="351" width="1" height="13" fill="#c7c5b2"/>
<rect x="827" y="351" width="1" height="13" fill="#ffffff"/>
<rect x="1017" y="351" width="1" height="13" fill="#c7c5b2"/>
<rect x="1018" y="351" width="1" height="13" fill="#ffffff"/>
<text x="26" y="362" font-size="11" fill="#000" textLength="30" lengthAdjust="spacingAndGlyphs" stroke="#000" stroke-width="0.15" xml:space="preserve">Orden</text>
<path d="M73.5,352 l4,8 h-8 z" fill="#f4f3ee" stroke="#aca899"/>
<text x="193.5" y="362" font-size="11" fill="#000" textLength="33" lengthAdjust="spacingAndGlyphs" stroke="#000" stroke-width="0.15" xml:space="preserve">Tiempo</text>
<text x="263.5" y="362" font-size="11" fill="#000" textLength="19" lengthAdjust="spacingAndGlyphs" stroke="#000" stroke-width="0.15" xml:space="preserve">Tipo</text>
<text x="298" y="362" font-size="11" fill="#000" textLength="25" lengthAdjust="spacingAndGlyphs" stroke="#000" stroke-width="0.15" xml:space="preserve">Vol...</text>
<text x="344.0" y="362" font-size="11" fill="#000" textLength="37.5" lengthAdjust="spacingAndGlyphs" stroke="#000" stroke-width="0.15" xml:space="preserve">Simbolo</text>
<text x="415.0" y="362" font-size="11" fill="#000" textLength="28.5" lengthAdjust="spacingAndGlyphs" stroke="#000" stroke-width="0.15" xml:space="preserve">Precio</text>
<text x="484.5" y="362" font-size="11" fill="#000" textLength="21" lengthAdjust="spacingAndGlyphs" stroke="#000" stroke-width="0.15" xml:space="preserve">S / L</text>
<text x="546.5" y="362" font-size="11" fill="#000" textLength="21" lengthAdjust="spacingAndGlyphs" stroke="#000" stroke-width="0.15" xml:space="preserve">T / P</text>
<text x="601.0" y="362" font-size="11" fill="#000" textLength="28.5" lengthAdjust="spacingAndGlyphs" stroke="#000" stroke-width="0.15" xml:space="preserve">Precio</text>
<text x="650.0" y="362" font-size="11" fill="#000" textLength="41.5" lengthAdjust="spacingAndGlyphs" stroke="#000" stroke-width="0.15" xml:space="preserve">Comisi¢n</text>
<text x="727.5" y="362" font-size="11" fill="#000" textLength="26" lengthAdjust="spacingAndGlyphs" stroke="#000" stroke-width="0.15" xml:space="preserve">Swap</text>
<text x="774.0" y="362" font-size="11" fill="#000" textLength="47.5" lengthAdjust="spacingAndGlyphs" stroke="#000" stroke-width="0.15" xml:space="preserve">Beneficios</text>
<text x="957.5" y="362" font-size="11" fill="#000" textLength="54" lengthAdjust="spacingAndGlyphs" stroke="#000" stroke-width="0.15" xml:space="preserve">Comentario</text>
<rect x="15" y="369" width="1004" height="19" fill="#f7f7f7"/>
<rect x="15" y="388" width="1004" height="1" fill="#d0d0d0"/>
<rect x="94" y="369" width="1" height="19" fill="#d0d0d0"/>
<rect x="231" y="369" width="1" height="19" fill="#d0d0d0"/>
<rect x="287" y="369" width="1" height="19" fill="#d0d0d0"/>
<rect x="330" y="369" width="1" height="19" fill="#d0d0d0"/>
<rect x="386" y="369" width="1" height="19" fill="#d0d0d0"/>
<rect x="448" y="369" width="1" height="19" fill="#d0d0d0"/>
<rect x="510" y="369" width="1" height="19" fill="#d0d0d0"/>
<rect x="572" y="369" width="1" height="19" fill="#d0d0d0"/>
<rect x="634" y="369" width="1" height="19" fill="#d0d0d0"/>
<rect x="696" y="369" width="1" height="19" fill="#d0d0d0"/>
<rect x="758" y="369" width="1" height="19" fill="#d0d0d0"/>
<rect x="826" y="369" width="1" height="19" fill="#d0d0d0"/>
<path d="M19.5,371.5 h6.5 l3.5,3.5 v8.5 q0,1 -1,1 h-9 q-1,0 -1,-1 v-11 q0,-1 1,-1 z" fill="url(#pg)" stroke="#606060"/>
<path d="M26.5,372 v3 h2.5" fill="none" stroke="#9a9a9a" stroke-width="1"/>
<circle cx="28.3" cy="382.3" r="3.4" fill="url(#rb)" stroke="#a02000" stroke-width="0.7"/>
<text x="39.5" y="382" font-size="10.8" fill="#000" stroke="#000" stroke-width="0.15" xml:space="preserve">9863534</text>
<text x="142.5" y="382" font-size="10.8" fill="#000" textLength="86" lengthAdjust="spacingAndGlyphs" stroke="#000" stroke-width="0.15" xml:space="preserve">2008.11.24 14:48</text>
<text x="284.5" y="382" font-size="10.8" fill="#000" text-anchor="end" stroke="#000" stroke-width="0.15" xml:space="preserve">sell</text>
<text x="327.5" y="382" font-size="10.8" fill="#000" text-anchor="end" stroke="#000" stroke-width="0.15" xml:space="preserve">0.20</text>
<text x="383.5" y="382" font-size="10.8" fill="#000" text-anchor="end" stroke="#000" stroke-width="0.15" xml:space="preserve">eurjpy</text>
<text x="445.5" y="382" font-size="10.8" fill="#000" text-anchor="end" stroke="#000" stroke-width="0.15" xml:space="preserve">122.10</text>
<text x="507.5" y="382" font-size="10.8" fill="#000" text-anchor="end" stroke="#000" stroke-width="0.15" xml:space="preserve">0.00</text>
<text x="569.5" y="382" font-size="10.8" fill="#000" text-anchor="end" stroke="#000" stroke-width="0.15" xml:space="preserve">0.00</text>
<text x="631.5" y="382" font-size="10.8" fill="#000" text-anchor="end" stroke="#000" stroke-width="0.15" xml:space="preserve">123.25</text>
<text x="693.5" y="382" font-size="10.8" fill="#000" text-anchor="end" stroke="#000" stroke-width="0.15" xml:space="preserve">0.00</text>
<text x="755.5" y="382" font-size="10.8" fill="#000" text-anchor="end" stroke="#000" stroke-width="0.15" xml:space="preserve">-4.83</text>
<text x="823.5" y="382" font-size="10.8" fill="#000" text-anchor="end" stroke="#000" stroke-width="0.15" xml:space="preserve">-115</text>
<text x="1013" y="382" font-size="10.8" fill="#000" text-anchor="end" stroke="#000" stroke-width="0.15" xml:space="preserve">from #9862991</text>
<rect x="15" y="389" width="1004" height="19" fill="#e8e8e8"/>
<rect x="15" y="408" width="1004" height="1" fill="#d0d0d0"/>
<rect x="94" y="389" width="1" height="19" fill="#d0d0d0"/>
<rect x="231" y="389" width="1" height="19" fill="#d0d0d0"/>
<rect x="287" y="389" width="1" height="19" fill="#d0d0d0"/>
<rect x="330" y="389" width="1" height="19" fill="#d0d0d0"/>
<rect x="386" y="389" width="1" height="19" fill="#d0d0d0"/>
<rect x="448" y="389" width="1" height="19" fill="#d0d0d0"/>
<rect x="510" y="389" width="1" height="19" fill="#d0d0d0"/>
<rect x="572" y="389" width="1" height="19" fill="#d0d0d0"/>
<rect x="634" y="389" width="1" height="19" fill="#d0d0d0"/>
<rect x="696" y="389" width="1" height="19" fill="#d0d0d0"/>
<rect x="758" y="389" width="1" height="19" fill="#d0d0d0"/>
<rect x="826" y="389" width="1" height="19" fill="#d0d0d0"/>
<path d="M19.5,391.5 h6.5 l3.5,3.5 v8.5 q0,1 -1,1 h-9 q-1,0 -1,-1 v-11 q0,-1 1,-1 z" fill="url(#pg)" stroke="#606060"/>
<path d="M26.5,392 v3 h2.5" fill="none" stroke="#9a9a9a" stroke-width="1"/>
<circle cx="28.3" cy="402.3" r="3.4" fill="url(#rb)" stroke="#a02000" stroke-width="0.7"/>
<text x="39.5" y="402" font-size="10.8" fill="#000" stroke="#000" stroke-width="0.15" xml:space="preserve">9866460</text>
<text x="142.5" y="402" font-size="10.8" fill="#000" textLength="86" lengthAdjust="spacingAndGlyphs" stroke="#000" stroke-width="0.15" xml:space="preserve">2008.11.24 15:56</text>
<text x="284.5" y="402" font-size="10.8" fill="#000" text-anchor="end" stroke="#000" stroke-width="0.15" xml:space="preserve">sell</text>
<text x="327.5" y="402" font-size="10.8" fill="#000" text-anchor="end" stroke="#000" stroke-width="0.15" xml:space="preserve">0.10</text>
<text x="383.5" y="402" font-size="10.8" fill="#000" text-anchor="end" stroke="#000" stroke-width="0.15" xml:space="preserve">eurjpy</text>
<text x="445.5" y="402" font-size="10.8" fill="#000" text-anchor="end" stroke="#000" stroke-width="0.15" xml:space="preserve">122.42</text>
<text x="507.5" y="402" font-size="10.8" fill="#000" text-anchor="end" stroke="#000" stroke-width="0.15" xml:space="preserve">0.00</text>
<text x="569.5" y="402" font-size="10.8" fill="#000" text-anchor="end" stroke="#000" stroke-width="0.15" xml:space="preserve">0.00</text>
<text x="631.5" y="402" font-size="10.8" fill="#000" text-anchor="end" stroke="#000" stroke-width="0.15" xml:space="preserve">123.25</text>
<text x="693.5" y="402" font-size="10.8" fill="#000" text-anchor="end" stroke="#000" stroke-width="0.15" xml:space="preserve">0.00</text>
<text x="755.5" y="402" font-size="10.8" fill="#000" text-anchor="end" stroke="#000" stroke-width="0.15" xml:space="preserve">-2.41</text>
<text x="823.5" y="402" font-size="10.8" fill="#000" text-anchor="end" stroke="#000" stroke-width="0.15" xml:space="preserve">-83</text>
<rect x="15" y="409" width="1004" height="19" fill="#f7f7f7"/>
<rect x="15" y="428" width="1004" height="1" fill="#d0d0d0"/>
<rect x="94" y="409" width="1" height="19" fill="#d0d0d0"/>
<rect x="231" y="409" width="1" height="19" fill="#d0d0d0"/>
<rect x="287" y="409" width="1" height="19" fill="#d0d0d0"/>
<rect x="330" y="409" width="1" height="19" fill="#d0d0d0"/>
<rect x="386" y="409" width="1" height="19" fill="#d0d0d0"/>
<rect x="448" y="409" width="1" height="19" fill="#d0d0d0"/>
<rect x="510" y="409" width="1" height="19" fill="#d0d0d0"/>
<rect x="572" y="409" width="1" height="19" fill="#d0d0d0"/>
<rect x="634" y="409" width="1" height="19" fill="#d0d0d0"/>
<rect x="696" y="409" width="1" height="19" fill="#d0d0d0"/>
<rect x="758" y="409" width="1" height="19" fill="#d0d0d0"/>
<rect x="826" y="409" width="1" height="19" fill="#d0d0d0"/>
<path d="M19.5,411.5 h6.5 l3.5,3.5 v8.5 q0,1 -1,1 h-9 q-1,0 -1,-1 v-11 q0,-1 1,-1 z" fill="url(#pg)" stroke="#606060"/>
<path d="M26.5,412 v3 h2.5" fill="none" stroke="#9a9a9a" stroke-width="1"/>
<circle cx="28.3" cy="422.3" r="3.4" fill="url(#bb)" stroke="#0a5aa8" stroke-width="0.7"/>
<text x="39.5" y="422" font-size="10.8" fill="#000" stroke="#000" stroke-width="0.15" xml:space="preserve">9889776</text>
<text x="142.5" y="422" font-size="10.8" fill="#000" textLength="86" lengthAdjust="spacingAndGlyphs" stroke="#000" stroke-width="0.15" xml:space="preserve">2008.11.25 00:39</text>
<text x="284.5" y="422" font-size="10.8" fill="#000" text-anchor="end" stroke="#000" stroke-width="0.15" xml:space="preserve">buy</text>
<text x="327.5" y="422" font-size="10.8" fill="#000" text-anchor="end" stroke="#000" stroke-width="0.15" xml:space="preserve">0.10</text>
<text x="383.5" y="422" font-size="10.8" fill="#000" text-anchor="end" stroke="#000" stroke-width="0.15" xml:space="preserve">eurjpy</text>
<text x="445.5" y="422" font-size="10.8" fill="#000" text-anchor="end" stroke="#000" stroke-width="0.15" xml:space="preserve">125.32</text>
<text x="507.5" y="422" font-size="10.8" fill="#000" text-anchor="end" stroke="#000" stroke-width="0.15" xml:space="preserve">0.00</text>
<text x="569.5" y="422" font-size="10.8" fill="#000" text-anchor="end" stroke="#000" stroke-width="0.15" xml:space="preserve">0.00</text>
<text x="631.5" y="422" font-size="10.8" fill="#000" text-anchor="end" stroke="#000" stroke-width="0.15" xml:space="preserve">123.21</text>
<text x="693.5" y="422" font-size="10.8" fill="#000" text-anchor="end" stroke="#000" stroke-width="0.15" xml:space="preserve">0.00</text>
<text x="755.5" y="422" font-size="10.8" fill="#000" text-anchor="end" stroke="#000" stroke-width="0.15" xml:space="preserve">0.56</text>
<text x="823.5" y="422" font-size="10.8" fill="#000" text-anchor="end" stroke="#000" stroke-width="0.15" xml:space="preserve">-211</text>
<rect x="15" y="429" width="1004" height="19" fill="#e8e8e8"/>
<rect x="15" y="448" width="1004" height="1" fill="#d0d0d0"/>
<rect x="94" y="429" width="1" height="19" fill="#d0d0d0"/>
<rect x="231" y="429" width="1" height="19" fill="#d0d0d0"/>
<rect x="287" y="429" width="1" height="19" fill="#d0d0d0"/>
<rect x="330" y="429" width="1" height="19" fill="#d0d0d0"/>
<rect x="386" y="429" width="1" height="19" fill="#d0d0d0"/>
<rect x="448" y="429" width="1" height="19" fill="#d0d0d0"/>
<rect x="510" y="429" width="1" height="19" fill="#d0d0d0"/>
<rect x="572" y="429" width="1" height="19" fill="#d0d0d0"/>
<rect x="634" y="429" width="1" height="19" fill="#d0d0d0"/>
<rect x="696" y="429" width="1" height="19" fill="#d0d0d0"/>
<rect x="758" y="429" width="1" height="19" fill="#d0d0d0"/>
<rect x="826" y="429" width="1" height="19" fill="#d0d0d0"/>
<path d="M19.5,431.5 h6.5 l3.5,3.5 v8.5 q0,1 -1,1 h-9 q-1,0 -1,-1 v-11 q0,-1 1,-1 z" fill="url(#pg)" stroke="#606060"/>
<path d="M26.5,432 v3 h2.5" fill="none" stroke="#9a9a9a" stroke-width="1"/>
<circle cx="28.3" cy="442.3" r="3.4" fill="url(#bb)" stroke="#0a5aa8" stroke-width="0.7"/>
<text x="39.5" y="442" font-size="10.8" fill="#000" stroke="#000" stroke-width="0.15" xml:space="preserve">9889929</text>
<text x="142.5" y="442" font-size="10.8" fill="#000" textLength="86" lengthAdjust="spacingAndGlyphs" stroke="#000" stroke-width="0.15" xml:space="preserve">2008.11.25 00:54</text>
<text x="284.5" y="442" font-size="10.8" fill="#000" text-anchor="end" stroke="#000" stroke-width="0.15" xml:space="preserve">buy</text>
<text x="327.5" y="442" font-size="10.8" fill="#000" text-anchor="end" stroke="#000" stroke-width="0.15" xml:space="preserve">0.10</text>
<text x="383.5" y="442" font-size="10.8" fill="#000" text-anchor="end" stroke="#000" stroke-width="0.15" xml:space="preserve">eurjpy</text>
<text x="445.5" y="442" font-size="10.8" fill="#000" text-anchor="end" stroke="#000" stroke-width="0.15" xml:space="preserve">125.21</text>
<text x="507.5" y="442" font-size="10.8" fill="#000" text-anchor="end" stroke="#000" stroke-width="0.15" xml:space="preserve">0.00</text>
<text x="569.5" y="442" font-size="10.8" fill="#000" text-anchor="end" stroke="#000" stroke-width="0.15" xml:space="preserve">0.00</text>
<text x="631.5" y="442" font-size="10.8" fill="#000" text-anchor="end" stroke="#000" stroke-width="0.15" xml:space="preserve">123.21</text>
<text x="693.5" y="442" font-size="10.8" fill="#000" text-anchor="end" stroke="#000" stroke-width="0.15" xml:space="preserve">0.00</text>
<text x="755.5" y="442" font-size="10.8" fill="#000" text-anchor="end" stroke="#000" stroke-width="0.15" xml:space="preserve">0.56</text>
<text x="823.5" y="442" font-size="10.8" fill="#000" text-anchor="end" stroke="#000" stroke-width="0.15" xml:space="preserve">-200</text>
<rect x="15" y="449" width="1004" height="19" fill="#f7f7f7"/>
<rect x="15" y="468" width="1004" height="1" fill="#d0d0d0"/>
<rect x="94" y="449" width="1" height="19" fill="#d0d0d0"/>
<rect x="231" y="449" width="1" height="19" fill="#d0d0d0"/>
<rect x="287" y="449" width="1" height="19" fill="#d0d0d0"/>
<rect x="330" y="449" width="1" height="19" fill="#d0d0d0"/>
<rect x="386" y="449" width="1" height="19" fill="#d0d0d0"/>
<rect x="448" y="449" width="1" height="19" fill="#d0d0d0"/>
<rect x="510" y="449" width="1" height="19" fill="#d0d0d0"/>
<rect x="572" y="449" width="1" height="19" fill="#d0d0d0"/>
<rect x="634" y="449" width="1" height="19" fill="#d0d0d0"/>
<rect x="696" y="449" width="1" height="19" fill="#d0d0d0"/>
<rect x="758" y="449" width="1" height="19" fill="#d0d0d0"/>
<rect x="826" y="449" width="1" height="19" fill="#d0d0d0"/>
<path d="M19.5,451.5 h6.5 l3.5,3.5 v8.5 q0,1 -1,1 h-9 q-1,0 -1,-1 v-11 q0,-1 1,-1 z" fill="url(#pg)" stroke="#606060"/>
<path d="M26.5,452 v3 h2.5" fill="none" stroke="#9a9a9a" stroke-width="1"/>
<circle cx="28.3" cy="462.3" r="3.4" fill="url(#bb)" stroke="#0a5aa8" stroke-width="0.7"/>
<text x="39.5" y="462" font-size="10.8" fill="#000" stroke="#000" stroke-width="0.15" xml:space="preserve">9915945</text>
<text x="142.5" y="462" font-size="10.8" fill="#000" textLength="86" lengthAdjust="spacingAndGlyphs" stroke="#000" stroke-width="0.15" xml:space="preserve">2008.11.25 16:14</text>
<text x="284.5" y="462" font-size="10.8" fill="#000" text-anchor="end" stroke="#000" stroke-width="0.15" xml:space="preserve">buy</text>
<text x="327.5" y="462" font-size="10.8" fill="#000" text-anchor="end" stroke="#000" stroke-width="0.15" xml:space="preserve">0.10</text>
<text x="383.5" y="462" font-size="10.8" fill="#000" text-anchor="end" stroke="#000" stroke-width="0.15" xml:space="preserve">eurjpy</text>
<text x="445.5" y="462" font-size="10.8" fill="#000" text-anchor="end" stroke="#000" stroke-width="0.15" xml:space="preserve">124.77</text>
<text x="507.5" y="462" font-size="10.8" fill="#000" text-anchor="end" stroke="#000" stroke-width="0.15" xml:space="preserve">0.00</text>
<text x="569.5" y="462" font-size="10.8" fill="#000" text-anchor="end" stroke="#000" stroke-width="0.15" xml:space="preserve">0.00</text>
<text x="631.5" y="462" font-size="10.8" fill="#000" text-anchor="end" stroke="#000" stroke-width="0.15" xml:space="preserve">123.21</text>
<text x="693.5" y="462" font-size="10.8" fill="#000" text-anchor="end" stroke="#000" stroke-width="0.15" xml:space="preserve">0.00</text>
<text x="755.5" y="462" font-size="10.8" fill="#000" text-anchor="end" stroke="#000" stroke-width="0.15" xml:space="preserve">0.56</text>
<text x="823.5" y="462" font-size="10.8" fill="#000" text-anchor="end" stroke="#000" stroke-width="0.15" xml:space="preserve">-156</text>
<rect x="15" y="469" width="1004" height="19" fill="#e8e8e8"/>
<rect x="15" y="488" width="1004" height="1" fill="#d0d0d0"/>
<rect x="94" y="469" width="1" height="19" fill="#d0d0d0"/>
<rect x="231" y="469" width="1" height="19" fill="#d0d0d0"/>
<rect x="287" y="469" width="1" height="19" fill="#d0d0d0"/>
<rect x="330" y="469" width="1" height="19" fill="#d0d0d0"/>
<rect x="386" y="469" width="1" height="19" fill="#d0d0d0"/>
<rect x="448" y="469" width="1" height="19" fill="#d0d0d0"/>
<rect x="510" y="469" width="1" height="19" fill="#d0d0d0"/>
<rect x="572" y="469" width="1" height="19" fill="#d0d0d0"/>
<rect x="634" y="469" width="1" height="19" fill="#d0d0d0"/>
<rect x="696" y="469" width="1" height="19" fill="#d0d0d0"/>
<rect x="758" y="469" width="1" height="19" fill="#d0d0d0"/>
<rect x="826" y="469" width="1" height="19" fill="#d0d0d0"/>
<path d="M19.5,471.5 h6.5 l3.5,3.5 v8.5 q0,1 -1,1 h-9 q-1,0 -1,-1 v-11 q0,-1 1,-1 z" fill="url(#pg)" stroke="#606060"/>
<path d="M26.5,472 v3 h2.5" fill="none" stroke="#9a9a9a" stroke-width="1"/>
<circle cx="28.3" cy="482.3" r="3.4" fill="url(#bb)" stroke="#0a5aa8" stroke-width="0.7"/>
<text x="39.5" y="482" font-size="10.8" fill="#000" stroke="#000" stroke-width="0.15" xml:space="preserve">9939627</text>
<text x="142.5" y="482" font-size="10.8" fill="#000" textLength="86" lengthAdjust="spacingAndGlyphs" stroke="#000" stroke-width="0.15" xml:space="preserve">2008.11.26 02:20</text>
<text x="284.5" y="482" font-size="10.8" fill="#000" text-anchor="end" stroke="#000" stroke-width="0.15" xml:space="preserve">buy</text>
<text x="327.5" y="482" font-size="10.8" fill="#000" text-anchor="end" stroke="#000" stroke-width="0.15" xml:space="preserve">0.10</text>
<text x="383.5" y="482" font-size="10.8" fill="#000" text-anchor="end" stroke="#000" stroke-width="0.15" xml:space="preserve">eurjpy</text>
<text x="445.5" y="482" font-size="10.8" fill="#000" text-anchor="end" stroke="#000" stroke-width="0.15" xml:space="preserve">123.73</text>
<text x="507.5" y="482" font-size="10.8" fill="#000" text-anchor="end" stroke="#000" stroke-width="0.15" xml:space="preserve">0.00</text>
<text x="569.5" y="482" font-size="10.8" fill="#000" text-anchor="end" stroke="#000" stroke-width="0.15" xml:space="preserve">0.00</text>
<text x="631.5" y="482" font-size="10.8" fill="#000" text-anchor="end" stroke="#000" stroke-width="0.15" xml:space="preserve">123.21</text>
<text x="693.5" y="482" font-size="10.8" fill="#000" text-anchor="end" stroke="#000" stroke-width="0.15" xml:space="preserve">0.00</text>
<text x="755.5" y="482" font-size="10.8" fill="#000" text-anchor="end" stroke="#000" stroke-width="0.15" xml:space="preserve">0.00</text>
<text x="823.5" y="482" font-size="10.8" fill="#000" text-anchor="end" stroke="#000" stroke-width="0.15" xml:space="preserve">-52</text>
<rect x="15" y="488" width="1004" height="20" fill="#316ac5"/>
<rect x="94" y="488" width="1" height="20" fill="#d0d0d0"/>
<rect x="231" y="488" width="1" height="20" fill="#d0d0d0"/>
<rect x="287" y="488" width="1" height="20" fill="#d0d0d0"/>
<rect x="330" y="488" width="1" height="20" fill="#d0d0d0"/>
<rect x="386" y="488" width="1" height="20" fill="#d0d0d0"/>
<rect x="448" y="488" width="1" height="20" fill="#d0d0d0"/>
<rect x="510" y="488" width="1" height="20" fill="#d0d0d0"/>
<rect x="572" y="488" width="1" height="20" fill="#d0d0d0"/>
<rect x="634" y="488" width="1" height="20" fill="#d0d0d0"/>
<rect x="696" y="488" width="1" height="20" fill="#d0d0d0"/>
<rect x="758" y="488" width="1" height="20" fill="#d0d0d0"/>
<rect x="826" y="488" width="1" height="20" fill="#d0d0d0"/>
<path d="M19.5,491.5 h6.5 l3.5,3.5 v8.5 q0,1 -1,1 h-9 q-1,0 -1,-1 v-11 q0,-1 1,-1 z" fill="url(#pg)" stroke="#606060"/>
<path d="M26.5,492 v3 h2.5" fill="none" stroke="#9a9a9a" stroke-width="1"/>
<circle cx="28.3" cy="502.3" r="3.4" fill="url(#rb)" stroke="#a02000" stroke-width="0.7"/>
<text x="39.5" y="502" font-size="10.8" fill="#fff" stroke="#fff" stroke-width="0.15" xml:space="preserve">9969330</text>
<text x="142.5" y="502" font-size="10.8" fill="#fff" textLength="86" lengthAdjust="spacingAndGlyphs" stroke="#fff" stroke-width="0.15" xml:space="preserve">2008.11.26 18:37</text>
<text x="284.5" y="502" font-size="10.8" fill="#fff" text-anchor="end" stroke="#fff" stroke-width="0.15" xml:space="preserve">sell</text>
<text x="327.5" y="502" font-size="10.8" fill="#fff" text-anchor="end" stroke="#fff" stroke-width="0.15" xml:space="preserve">0.10</text>
<text x="383.5" y="502" font-size="10.8" fill="#fff" text-anchor="end" stroke="#fff" stroke-width="0.15" xml:space="preserve">eurjpy</text>
<text x="445.5" y="502" font-size="10.8" fill="#fff" text-anchor="end" stroke="#fff" stroke-width="0.15" xml:space="preserve">123.04</text>
<text x="507.5" y="502" font-size="10.8" fill="#fff" text-anchor="end" stroke="#fff" stroke-width="0.15" xml:space="preserve">0.00</text>
<text x="569.5" y="502" font-size="10.8" fill="#fff" text-anchor="end" stroke="#fff" stroke-width="0.15" xml:space="preserve">0.00</text>
<text x="631.5" y="502" font-size="10.8" fill="#fff" text-anchor="end" stroke="#fff" stroke-width="0.15" xml:space="preserve">123.25</text>
<text x="693.5" y="502" font-size="10.8" fill="#fff" text-anchor="end" stroke="#fff" stroke-width="0.15" xml:space="preserve">0.00</text>
<text x="755.5" y="502" font-size="10.8" fill="#fff" text-anchor="end" stroke="#fff" stroke-width="0.15" xml:space="preserve">0.00</text>
<text x="823.5" y="502" font-size="10.8" fill="#fff" text-anchor="end" stroke="#fff" stroke-width="0.15" xml:space="preserve">-21</text>
<rect x="15" y="365" width="1004" height="1" fill="#e2ded0"/>
<rect x="15" y="366" width="1004" height="1" fill="#d6d0c2"/>
<rect x="15" y="367" width="1004" height="1" fill="#cdc5b7"/>
<rect x="15" y="368" width="1004" height="1" fill="#c7bfb1"/>
<rect x="15" y="508" width="1004" height="20" fill="#c8c8c8"/>
<rect x="15" y="528" width="1004" height="1" fill="#ffffff"/>
<rect x="15" y="529" width="1004" height="1" fill="#ffffff"/>
<rect x="96" y="530" width="923" height="1" fill="#000"/>
<rect x="15" y="530" width="81" height="1" fill="#ffffff"/>
<rect x="19" y="512" width="11" height="13" rx="1" fill="#a8a8a8"/>
<rect x="18.5" y="511.5" width="11" height="13" rx="1" fill="#f8f8f8" stroke="#707070"/>
<defs><linearGradient id="ag" x1="0" y1="0" x2="1" y2="0"><stop offset="0" stop-color="#c83000"/><stop offset="0.5" stop-color="#ff7040"/><stop offset="1" stop-color="#c83000"/></linearGradient></defs>
<path d="M22.8,515 h2.6 v3 h2.6 l-3.9,4.2 l-3.9,-4.2 h2.6 z" fill="url(#ag)"/>
<rect x="15" y="530" width="3" height="1" fill="#000"/>
<text x="40" y="522" font-size="11" fill="#000" textLength="104" lengthAdjust="spacingAndGlyphs" font-weight="bold" stroke="#000" stroke-width="0.35" xml:space="preserve">Balance: 14 664.19</text>
<text x="151" y="522" font-size="11" fill="#000" textLength="103.5" lengthAdjust="spacingAndGlyphs" font-weight="bold" stroke="#000" stroke-width="0.35" xml:space="preserve">Equidad: 13 885.26</text>
<text x="261" y="522" font-size="11" fill="#000" textLength="96.5" lengthAdjust="spacingAndGlyphs" font-weight="bold" stroke="#000" stroke-width="0.35" xml:space="preserve">Margen: 1 600.00</text>
<text x="365" y="522" font-size="11" fill="#000" textLength="131" lengthAdjust="spacingAndGlyphs" font-weight="bold" stroke="#000" stroke-width="0.35" xml:space="preserve">Margen libre: 12 285.26</text>
<text x="502.5" y="522" font-size="11" fill="#000" textLength="150.0" lengthAdjust="spacingAndGlyphs" font-weight="bold" stroke="#000" stroke-width="0.35" xml:space="preserve">Nivel del margen: 867.83%</text>
<text x="781" y="522" font-size="11" fill="#000" textLength="41.5" lengthAdjust="spacingAndGlyphs" font-weight="bold" stroke="#000" stroke-width="0.35" xml:space="preserve">-778.93</text>
</svg>
</body></html>
